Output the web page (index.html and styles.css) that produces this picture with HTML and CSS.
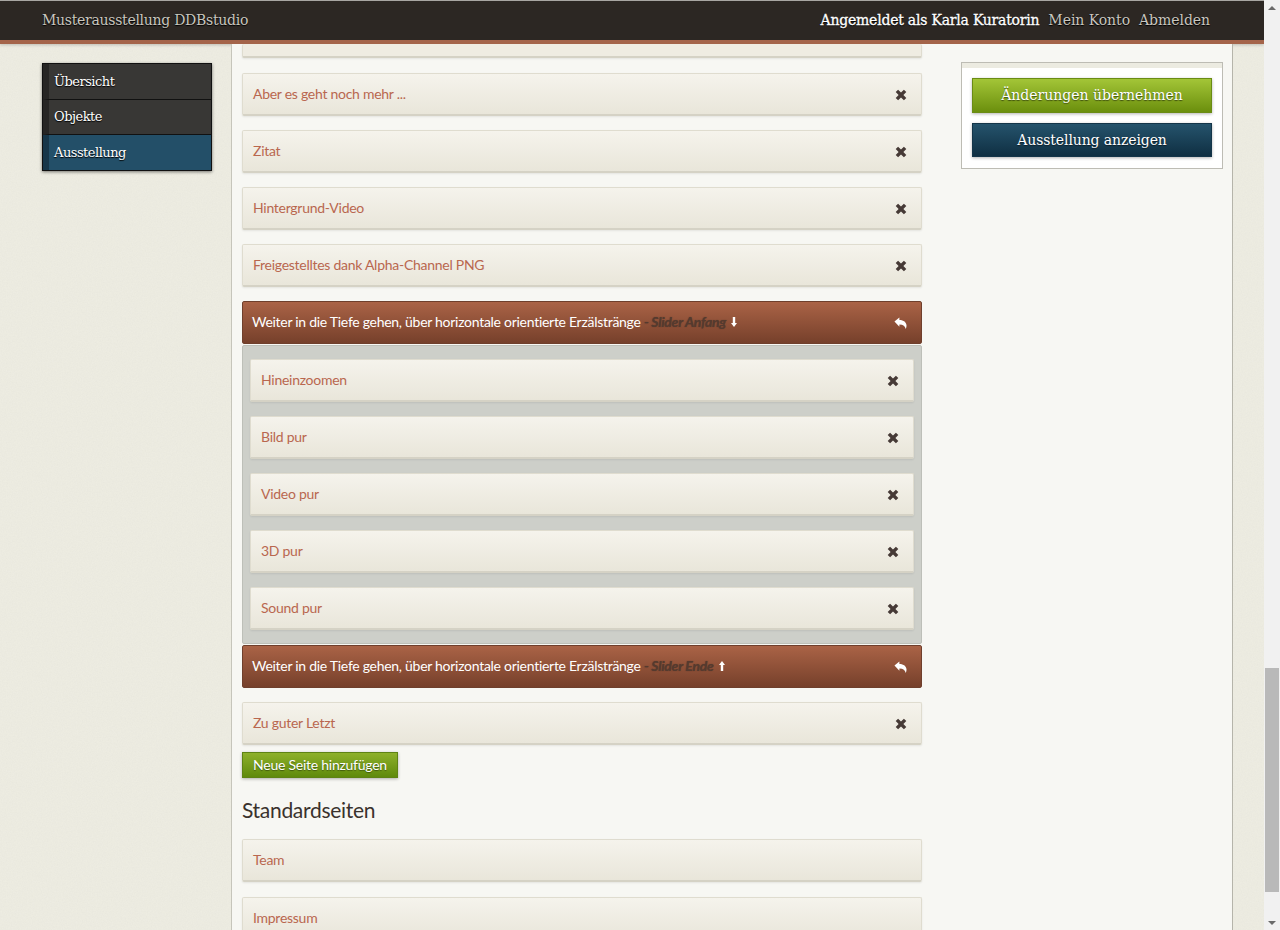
FILE: index.html
```html
<!DOCTYPE html>
<html lang="de">
<head>
    <meta charset="UTF-8">
    <title>Musterausstellung DDBstudio</title>
    <link rel="stylesheet" href="styles.css">
</head>
<body>
    <svg class="icon-defs" width="0" height="0">
        <symbol id="icon-x" viewBox="0 0 12 12">
            <path d="M3.1 .7 6 3.6 8.9 .7 11.3 3.1 8.4 6 11.3 8.9 8.9 11.3 6 8.4 3.1 11.3 .7 8.9 3.6 6 .7 3.1Z"/>
        </symbol>
        <symbol id="icon-reply" viewBox="0 0 14 14">
            <path d="M.5 5.500 5.800 1v2.800c4.600 0 7.700 2.500 7.700 6.200 0 1.300-.4 2.600-1 3.500-.2-3.300-2.500-5-6.700-5V11Z"/>
        </symbol>
        <symbol id="icon-down" viewBox="0 0 6 10">
            <path d="M1.800 0h2.400v6H6L3 10 0 6h1.800Z"/>
        </symbol>
        <symbol id="icon-up" viewBox="0 0 6 10">
            <path d="M3 0 6 4H4.200v6H1.800V4H0Z"/>
        </symbol>
    </svg>

    <div class="page">
        <div class="topbar">
            <div class="brand">Musterausstellung DDBstudio</div>
            <div class="user-nav">
                <strong>Angemeldet als Karla Kuratorin</strong>
                <a href="#">Mein Konto</a>
                <a href="#">Abmelden</a>
            </div>
        </div>

        <div class="layout">
            <nav class="side-nav">
                <a href="#" class="nav-item">Übersicht</a>
                <a href="#" class="nav-item">Objekte</a>
                <a href="#" class="nav-item active">Ausstellung</a>
            </nav>

            <main class="main">
                <section class="content">
                    <div class="card card-cut"></div>
                    <div class="card"><a href="#">Aber es geht noch mehr ...</a><svg class="x"><use href="#icon-x"/></svg></div>
                    <div class="card"><a href="#">Zitat</a><svg class="x"><use href="#icon-x"/></svg></div>
                    <div class="card"><a href="#">Hintergrund-Video</a><svg class="x"><use href="#icon-x"/></svg></div>
                    <div class="card"><a href="#">Freigestelltes dank Alpha-Channel PNG</a><svg class="x"><use href="#icon-x"/></svg></div>

                    <div class="slider-bar">
                        <span>Weiter in die Tiefe gehen, über horizontale orientierte Erzälstränge <em>- Slider Anfang</em> <svg class="arrow"><use href="#icon-down"/></svg></span>
                        <svg class="reply"><use href="#icon-reply"/></svg>
                    </div>
                    <div class="slider-group">
                        <div class="card"><a href="#">Hineinzoomen</a><svg class="x"><use href="#icon-x"/></svg></div>
                        <div class="card"><a href="#">Bild pur</a><svg class="x"><use href="#icon-x"/></svg></div>
                        <div class="card"><a href="#">Video pur</a><svg class="x"><use href="#icon-x"/></svg></div>
                        <div class="card"><a href="#">3D pur</a><svg class="x"><use href="#icon-x"/></svg></div>
                        <div class="card"><a href="#">Sound pur</a><svg class="x"><use href="#icon-x"/></svg></div>
                    </div>
                    <div class="slider-bar">
                        <span>Weiter in die Tiefe gehen, über horizontale orientierte Erzälstränge <em>- Slider Ende</em> <svg class="arrow"><use href="#icon-up"/></svg></span>
                        <svg class="reply"><use href="#icon-reply"/></svg>
                    </div>

                    <div class="card card-last"><a href="#">Zu guter Letzt</a><svg class="x"><use href="#icon-x"/></svg></div>
                    <a href="#" class="add-button">Neue Seite hinzufügen</a>

                    <h2 class="section-title">Standardseiten</h2>
                    <div class="card card-plain"><a href="#">Team</a></div>
                    <div class="card card-plain"><a href="#">Impressum</a></div>
                </section>

                <aside class="actions">
                    <a href="#" class="action action-save">Änderungen übernehmen</a>
                    <a href="#" class="action action-show">Ausstellung anzeigen</a>
                </aside>
            </main>
        </div>
    </div>

    <div class="scrollbar">
        <span class="scroll-up"></span>
        <div class="scroll-track"><div class="scroll-thumb"></div></div>
        <span class="scroll-down"></span>
    </div>
</body>
</html>
```

FILE: styles.css
```css
* {
    margin: 0;
    padding: 0;
    box-sizing: border-box;
}

html, body {
    height: 930px;
    overflow: hidden;
}

body {
    display: flex;
    font-family: "Lato", "Open Sans", sans-serif;
    font-size: 14px;
    color: #3a322d;
    background-color: #eeede3;
    background-image: url("data:image/svg+xml,%3Csvg xmlns='http://www.w3.org/2000/svg' width='200' height='200'%3E%3Cfilter id='n'%3E%3CfeTurbulence type='fractalNoise' baseFrequency='.8' numOctaves='2'/%3E%3CfeColorMatrix values='0 0 0 0 .5 0 0 0 0 .5 0 0 0 0 .4 0 0 0 .1 0'/%3E%3C/filter%3E%3Crect width='200' height='200' filter='url(%23n)'/%3E%3C/svg%3E");
}

a {
    text-decoration: none;
}

.icon-defs {
    position: absolute;
}

.page {
    flex: 1;
    min-width: 0;
}

/* top bar */
.topbar {
    height: 44px;
    display: flex;
    align-items: center;
    justify-content: space-between;
    padding: 0 54px 2px 42px;
    background: #2c2723;
    border-top: 1px solid #a8a6a2;
    border-bottom: 4px solid #a4644a;
    box-shadow: 0 1px 3px rgba(0, 0, 0, 0.2);
    font-family: "DejaVu Serif", serif;
    font-size: 14px;
    color: #c9c6bf;
    text-shadow: 0 1px 1px #000;
}

.brand {
    letter-spacing: -0.28px;
}

.user-nav {
    display: flex;
    gap: 9px;
    letter-spacing: -0.05px;
}

.user-nav strong {
    font-weight: 400;
    letter-spacing: -0.22px;
    color: #fff;
    -webkit-text-stroke: 0.3px #fff;
}

.user-nav a {
    color: #c9c6bf;
}

.layout {
    display: flex;
    align-items: flex-start;
    padding-left: 42px;
}

/* left menu */
.side-nav {
    flex: none;
    width: 170px;
    margin: 19px 19px 0 0;
    border: 1px solid #111;
    box-shadow: 0 1px 3px rgba(0, 0, 0, 0.5);
    font-family: "DejaVu Serif", serif;
    font-size: 13px;
    letter-spacing: -0.5px;
}

.nav-item {
    display: block;
    height: 35px;
    line-height: 33px;
    padding-left: 5px;
    color: #fff;
    background: #383735;
    border-left: 6px solid #262524;
    border-bottom: 1px solid #111;
    text-shadow: 0 1px 1px #000;
}

.nav-item:first-child {
    height: 36px;
    line-height: 35px;
}

.nav-item:last-child {
    border-bottom: 0;
    line-height: 36px;
}

.nav-item.active {
    background: #234f68;
    border-left-color: #173649;
}

/* middle column */
.main {
    flex: none;
    display: flex;
    align-items: flex-start;
    width: 1002px;
    height: 886px;
    padding-left: 10px;
    background: #f7f7f3;
    border-left: 1px solid #c6c5bb;
    border-right: 1px solid #b5b4aa;
    overflow: hidden;
}

.content {
    flex: none;
    width: 680px;
}

.card {
    display: flex;
    align-items: center;
    justify-content: space-between;
    height: 43px;
    margin-bottom: 14px;
    padding: 0 14px 0 10px;
    background: linear-gradient(#f5f3ec, #e9e6da);
    border: 1px solid #dfdccf;
    border-bottom: 2px solid #d5d2c5;
    border-radius: 2px;
    box-shadow: 0 1px 2px rgba(0, 0, 0, 0.08);
}

.card a {
    margin-bottom: 2px;
    color: #b9674f;
    font-size: 14px;
    letter-spacing: -0.27px;
}

.card-cut {
    height: 14px;
    margin-bottom: 15px;
    border-top: 0;
    background: #efece2;
}

.x {
    width: 12px;
    height: 12px;
    margin-top: 2px;
    fill: #463a36;
}

.slider-bar {
    display: flex;
    align-items: center;
    justify-content: space-between;
    height: 43px;
    padding: 0 14px 2px 9px;
    color: #fff;
    background: linear-gradient(#aa6346, #76402b);
    border: 1px solid #6f3f2c;
    border-radius: 2px;
    font-size: 14px;
    letter-spacing: -0.28px;
}

.slider-bar em {
    font-weight: 700;
    color: #553a2e;
    text-shadow: 0 0 1px #553a2e;
}

.arrow {
    width: 6px;
    height: 10px;
    margin-left: 2px;
    fill: #fff;
}

.reply {
    width: 13px;
    height: 14px;
    margin-top: 2px;
    fill: #fff;
}

.slider-group {
    height: 299px;
    margin: 1px 0;
    padding: 13px 7px 0;
    background: #cdcfc9;
    border: 1px solid #bdbfb8;
    border-radius: 2px;
}

.card-last {
    margin-top: 14px;
    margin-bottom: 7px;
}

.add-button {
    display: block;
    width: 156px;
    height: 26px;
    line-height: 24px;
    text-align: center;
    color: #fff;
    background: linear-gradient(#8db02a, #5f8a0c);
    border: 1px solid #5e8314;
    box-shadow: 0 1px 3px rgba(0, 0, 0, 0.3);
    font-size: 14px;
    letter-spacing: -0.25px;
    text-shadow: 0 1px 1px rgba(0, 0, 0, 0.4);
}

.section-title {
    margin: 19px 0 16px;
    font-size: 21px;
    line-height: 26px;
    font-weight: 400;
    letter-spacing: -0.3px;
    color: #3a322d;
}

.card-plain {
    margin-bottom: 15px;
}

/* right column */
.actions {
    flex: none;
    display: flex;
    flex-direction: column;
    gap: 10px;
    width: 262px;
    height: 107px;
    margin: 18px 0 0 39px;
    padding: 15px 10px 0;
    background: #fff;
    border: 1px solid #bdbcb4;
    box-shadow: inset 0 5px 0 #ecebe1;
}

.action {
    display: block;
    height: 34px;
    line-height: 33px;
    text-align: center;
    color: #fff;
    font-family: "DejaVu Serif", serif;
    font-size: 14px;
    box-shadow: 0 1px 3px rgba(0, 0, 0, 0.3);
    text-shadow: 0 1px 1px rgba(0, 0, 0, 0.5);
}

.action-save {
    height: 35px;
    background: linear-gradient(#a3c537, #6b8f0d);
    border: 1px solid #6a8c14;
}

.action-show {
    letter-spacing: -0.1px;
    background: linear-gradient(#25536c, #0f2f42);
    border: 1px solid #143549;
}

/* scrollbar */
.scrollbar {
    flex: none;
    width: 16px;
    height: 930px;
    display: flex;
    flex-direction: column;
    align-items: center;
    background: #f1f1f1;
}

.scroll-up, .scroll-down {
    flex: none;
    width: 0;
    height: 0;
    border-left: 4px solid transparent;
    border-right: 4px solid transparent;
}

.scroll-up {
    margin-top: 6px;
    border-bottom: 4px solid #6a6a6a;
}

.scroll-down {
    margin-bottom: 5px;
    border-top: 4px solid #6a6a6a;
}

.scroll-track {
    flex: 1;
    width: 100%;
    padding: 658px 1px 0;
}

.scroll-thumb {
    height: 224px;
    background: #b9b9b9;
}
```
